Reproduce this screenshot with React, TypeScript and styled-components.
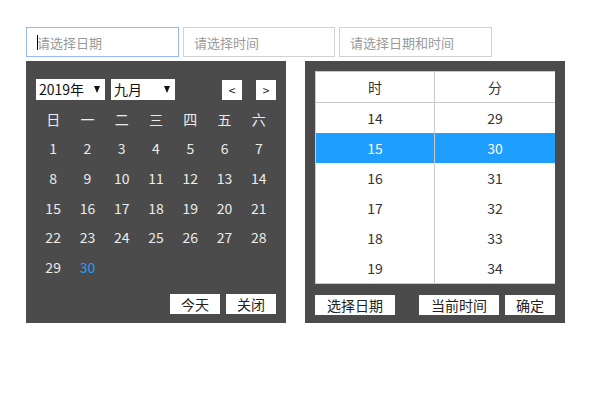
import React from 'react';
import styled, { createGlobalStyle } from 'styled-components';

const GlobalStyle = createGlobalStyle`
    html, body {
        margin: 0;
        padding: 0;
        background: #fff;
        font-family: "Noto Sans CJK SC", "Noto Sans", sans-serif;
    }
`

const Page = styled.div`
    padding: 27px 0 0 26px;
`

const InputRow = styled.div`
    display: flex;
    gap: 4px;
`

const InputWrap = styled.div`
    position: relative;
`

const TextCaret = styled.span`
    position: absolute;
    left: 11px;
    top: 8px;
    width: 1px;
    height: 15px;
    background: #000;
`

const DateInput = styled.input<{ $active?: boolean; $w: number }>`
    box-sizing: border-box;
    width: ${p => p.$w}px;
    height: 30px;
    padding: 0 10px;
    border: 1px solid ${p => (p.$active ? '#98b8f3' : '#d2d2d2')};
    outline: none;
    font-family: inherit;
    font-size: 13px;
    color: #333;
    caret-color: transparent;
    &::placeholder {
        color: #9a9a9a;
    }
`

const Panels = styled.div`
    display: flex;
    gap: 19px;
    margin-top: 4px;
`

const Panel = styled.div`
    box-sizing: border-box;
    width: 260px;
    height: 262px;
    background: #4a4b4a;
    display: flex;
    flex-direction: column;
`

const CalPanel = styled(Panel)`
    padding: 18px 10px 0 10px;
`

const TimePanel = styled(Panel)`
    padding: 10px 10px 0 10px;
`

const CalHeader = styled.div`
    display: flex;
    align-items: center;
    height: 21px;
    gap: 6px;
`

const Select = styled.div<{ $w: number }>`
    box-sizing: border-box;
    width: ${p => p.$w}px;
    height: 21px;
    background: #fff;
    color: #111;
    font-size: 14px;
    line-height: 21px;
    padding: 0 5px 0 3px;
    display: flex;
    justify-content: space-between;
    align-items: center;
`

const Caret = styled.span`
    width: 0;
    height: 0;
    border-left: 3.5px solid transparent;
    border-right: 3.5px solid transparent;
    border-top: 7px solid #111;
`

const Spacer = styled.div`
    flex: 1;
`

const NavBtn = styled.div`
    width: 20px;
    height: 20px;
    background: #fff;
    color: #222;
    font-size: 12px;
    line-height: 19px;
    text-align: center;
    margin-left: 8px;
`

const Grid = styled.div`
    display: grid;
    grid-template-columns: repeat(7, 1fr);
    grid-auto-rows: 29.6px;
    margin-top: 4px;
`

const Cell = styled.div<{ $today?: boolean }>`
    display: flex;
    align-items: center;
    justify-content: center;
    font-size: 14px;
    color: ${p => (p.$today ? '#1e9fff' : '#ececec')};
`

const Footer = styled.div<{ $end?: boolean }>`
    display: flex;
    gap: 6px;
    margin-top: 11px;
    justify-content: ${p => (p.$end ? 'flex-end' : 'flex-start')};
`

const Btn = styled.div<{ $w: number }>`
    width: ${p => p.$w}px;
    height: 20px;
    background: #fff;
    color: #222;
    font-size: 14px;
    line-height: 20px;
    text-align: center;
`

const Table = styled.div`
    box-sizing: border-box;
    width: 240px;
    background: #fff;
    border-left: 1px solid #c9c9c9;
    border-top: 1px solid #c9c9c9;
    border-bottom: 1px solid #c9c9c9;
    display: grid;
    grid-template-columns: 119px 120px;
`

const TCell = styled.div<{ $head?: boolean; $sel?: boolean; $first?: boolean }>`
    height: 30px;
    display: flex;
    align-items: center;
    justify-content: center;
    font-size: 14px;
    color: ${p => (p.$sel ? '#fff' : '#333')};
    background: ${p => (p.$sel ? '#1e9fff' : '#fff')};
    border-right: ${p => (p.$first ? '1px solid #c9c9c9' : 'none')};
    border-bottom: ${p => (p.$head ? '1px solid #c9c9c9' : 'none')};
`

const weekdays = ['日', '一', '二', '三', '四', '五', '六']
const hours = [14, 15, 16, 17, 18, 19]
const minutes = [29, 30, 31, 32, 33, 34]

export default function App() {
    const days = Array.from({ length: 30 }, (_, i) => i + 1)

    return (
        <>
            <GlobalStyle />
            <Page>
                <InputRow>
                    <InputWrap>
                        <DateInput $active $w={153} placeholder="请选择日期" />
                        <TextCaret />
                    </InputWrap>
                    <DateInput $w={152} placeholder="请选择时间" />
                    <DateInput $w={153} placeholder="请选择日期和时间" />
                </InputRow>
                <Panels>
                    <CalPanel>
                        <CalHeader>
                            <Select $w={69}>2019年<Caret /></Select>
                            <Select $w={64}>九月<Caret /></Select>
                            <Spacer />
                            <NavBtn>&lt;</NavBtn>
                            <NavBtn>&gt;</NavBtn>
                        </CalHeader>
                        <Grid>
                            {weekdays.map(w => <Cell key={w}>{w}</Cell>)}
                            {days.map(d => <Cell key={d} $today={d === 30}>{d}</Cell>)}
                        </Grid>
                        <Spacer />
                        <Footer $end style={{ marginBottom: 9 }}>
                            <Btn $w={50}>今天</Btn>
                            <Btn $w={50}>关闭</Btn>
                        </Footer>
                    </CalPanel>
                    <TimePanel>
                        <Table>
                            <TCell $head $first>时</TCell>
                            <TCell $head>分</TCell>
                            {hours.map((h, i) => (
                                <React.Fragment key={h}>
                                    <TCell $first $sel={h === 15}>{h}</TCell>
                                    <TCell $sel={h === 15}>{minutes[i]}</TCell>
                                </React.Fragment>
                            ))}
                        </Table>
                        <Footer>
                            <Btn $w={80}>选择日期</Btn>
                            <Spacer />
                            <Btn $w={80}>当前时间</Btn>
                            <Btn $w={50}>确定</Btn>
                        </Footer>
                    </TimePanel>
                </Panels>
            </Page>
        </>
    )
}
